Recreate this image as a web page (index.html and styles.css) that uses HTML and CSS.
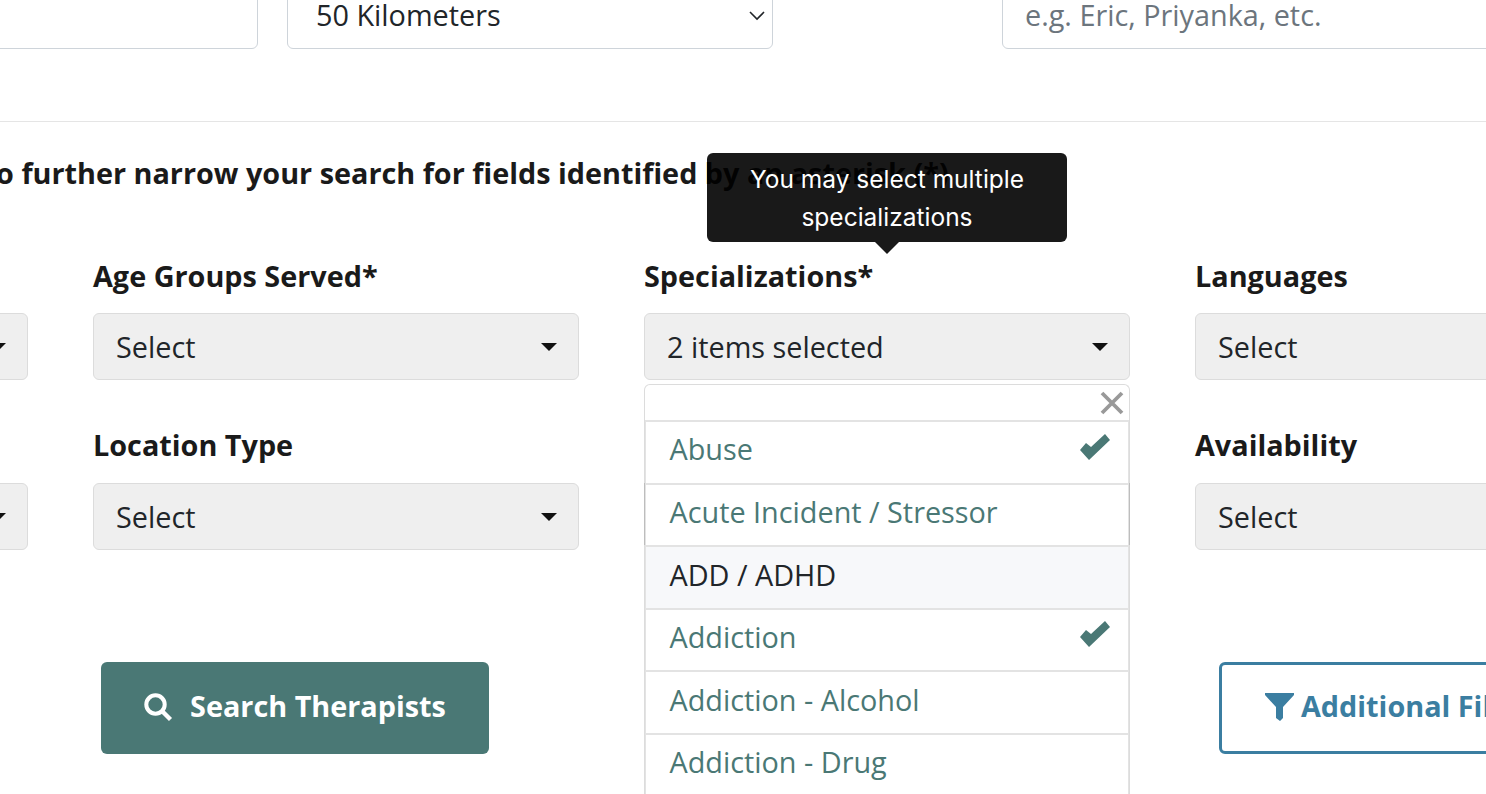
FILE: index.html
```html
<!DOCTYPE html>
<html lang="en">
<head>
<meta charset="utf-8">
<title>Search Therapists</title>
<link rel="stylesheet" href="styles.css">
</head>
<body>
<main class="page">
  <div class="top-row">
    <input class="text-input first" type="text" aria-label="Location">
    <div class="native-select">
      <span>50 Kilometers</span>
      <svg class="chev" viewBox="0 0 16 10" width="16" height="10"><path d="M1 1l7 7 7-7" fill="none" stroke="#212529" stroke-width="1.6"/></svg>
    </div>
    <div class="text-input name"><span class="placeholder">e.g. Eric, Priyanka, etc.</span></div>
  </div>
  <hr class="rule">
  <p class="intro">Use the filters below to further narrow your search for fields identified by an asterisk (*)</p>
  <div class="filters">
    <div class="field">
      <label class="field-label">Gender</label>
      <div class="drop"><span>Select</span><i class="caret"></i></div>
    </div>
    <div class="field">
      <label class="field-label">Age Groups Served*</label>
      <div class="drop"><span>Select</span><i class="caret"></i></div>
    </div>
    <div class="field spec">
      <div class="tooltip">You may select multiple specializations<i class="tip-arrow"></i></div>
      <label class="field-label">Specializations*</label>
      <div class="drop"><span>2 items selected</span><i class="caret"></i></div>
      <div class="menu">
        <div class="menu-head"><svg class="close" viewBox="0 0 24 24" width="24" height="24"><path d="M2 2l20 20M22 2L2 22" stroke="#999" stroke-width="3.800" fill="none"/></svg></div>
        <div class="opt first-opt">Abuse<svg class="tick" viewBox="0 0 30 26" width="30" height="26"><path d="M0 16l6-7 5 4L25 0l5 6L9 26z" fill="#4a7875"/></svg></div>
        <div class="opt edge">Acute Incident / Stressor</div>
        <div class="opt hover">ADD / ADHD</div>
        <div class="opt">Addiction<svg class="tick" viewBox="0 0 30 26" width="30" height="26"><path d="M0 16l6-7 5 4L25 0l5 6L9 26z" fill="#4a7875"/></svg></div>
        <div class="opt">Addiction - Alcohol</div>
        <div class="opt">Addiction - Drug</div>
      </div>
    </div>
    <div class="field">
      <label class="field-label">Languages</label>
      <div class="drop"><span>Select</span><i class="caret"></i></div>
    </div>
    <div class="field">
      <label class="field-label">Insurance</label>
      <div class="drop"><span>Select</span><i class="caret"></i></div>
    </div>
    <div class="field">
      <label class="field-label">Location Type</label>
      <div class="drop"><span>Select</span><i class="caret"></i></div>
    </div>
    <div class="field"></div>
    <div class="field">
      <label class="field-label">Availability</label>
      <div class="drop"><span>Select</span><i class="caret"></i></div>
    </div>
  </div>
  <div class="actions">
    <button class="btn primary" type="button">
      <svg viewBox="0 0 30 30" width="30" height="30"><circle cx="11.500" cy="12.500" r="9.200" fill="none" stroke="#fff" stroke-width="4"/><path d="M18.500 19.500l8 8" stroke="#fff" stroke-width="4.400" fill="none"/></svg>
      <span>Search Therapists</span>
    </button>
    <button class="btn outline" type="button">
      <svg viewBox="0 0 30 30" width="30" height="30"><path d="M0 1h29v2L18 15v11l-3 3-4-3V15L0 3z" fill="#3b7ea1"/></svg>
      <span>Additional Filters</span>
    </button>
  </div>
</main>
</body>
</html>
```
FILE: styles.css
```css
html, body { margin: 0; height: 794px; overflow: hidden; background: #fff; }
body { font-family: "Open Sans", "Liberation Sans", sans-serif; color: #1a1a1a; }
.page { width: 2200px; margin: -18px 0 0 -458px; }

.top-row { display: flex; gap: 29px; }
.text-input, .native-select {
  box-sizing: border-box; height: 67px; background: #fff; border: 1px solid #ced4da; border-radius: 6px;
  display: flex; align-items: center; font: 400 28.800px "Open Sans", sans-serif; color: #212529;
}
.text-input span, .native-select span { margin-bottom: 3px; }
.first { width: 716px; }
.native-select { width: 486px; padding: 0 7px 0 28px; justify-content: space-between; margin-right: 200px; }
.name { width: 700px; padding-left: 22px; }
.placeholder { color: #6c757d; }

.rule { margin: 72px 0 0; border: 0; border-top: 1px solid #e5e5e5; }
.intro { margin: 30px 0 0 138px; font-size: 28.800px; font-weight: 700; line-height: 42px; white-space: nowrap; }

.filters { display: grid; grid-template-columns: repeat(4, 486px); gap: 0 65px; margin-top: 64px; }
.field { position: relative; height: 170px; }
.field-label { display: block; font-size: 28.800px; font-weight: 700; line-height: 36px; margin: 0 0 19px; }
.filters .field:nth-child(n+5) .field-label { margin: -1px 0 20px; }
.drop {
  box-sizing: border-box; height: 67px; background: #efefef; border: 1px solid #dcdcdc; border-radius: 6px;
  display: flex; align-items: center; justify-content: space-between; padding: 0 21px 0 22px;
  font-size: 28.800px; color: #212529;
}
.caret { width: 0; height: 0; border-left: 8px solid transparent; border-right: 8px solid transparent; border-top: 8px solid #111; }

.tooltip {
  position: absolute; left: 63px; top: -105px; width: 360px; height: 89px; box-sizing: border-box;
  background: rgba(0,0,0,.9); color: #fff; border-radius: 6px; padding: 7px 30px; text-align: center;
  font: 400 24.500px/38px Inter, "Liberation Sans", sans-serif; z-index: 3;
}
.tip-arrow { position: absolute; left: 168px; bottom: -12px; width: 0; height: 0; border-left: 12px solid transparent; border-right: 12px solid transparent; border-top: 12px solid rgba(0,0,0,.9); }

.menu { position: absolute; left: 0; top: 126px; width: 486px; box-sizing: border-box; background: #fff; border: 1px solid #dcdcdc; border-bottom: 0; border-radius: 6px 6px 0 0; z-index: 2; }
.menu-head { height: 35px; display: flex; justify-content: flex-end; align-items: center; padding-right: 5px; }
.opt {
  box-sizing: border-box; height: 62.500px; border: 0 solid #e3e3e3; border-width: 2px 1px 0; padding: 2.600px 18px 0 23.500px;
  display: flex; justify-content: space-between; font-size: 28.800px; line-height: 50px; color: #4a7875;
}
.opt.first-opt { padding-top: 2px; }
.opt.first-opt .tick { margin-top: 9.600px; }
.opt.edge { box-shadow: -1px 0 0 #bdbdbd, 1px 0 0 #bdbdbd; }
.opt.hover { background: #f7f8fa; color: #212529; }
.tick { margin-top: 9px; }

.actions { display: flex; margin: 64px 0 0 559px; gap: 730px; }
.btn { box-sizing: border-box; height: 92px; display: flex; align-items: center; justify-content: center; gap: 16px; border-radius: 6px; font: 700 28.800px "Open Sans", sans-serif; }
.btn span { margin-bottom: 6px; }
.btn svg { margin-bottom: 2px; }
.primary { width: 388px; background: #4a7875; color: #fff; border: 0; }
.outline { width: 420px; background: #fff; color: #3b7ea1; border: 3px solid #3b7ea1; justify-content: flex-start; padding-left: 43px; gap: 6px; }
```
